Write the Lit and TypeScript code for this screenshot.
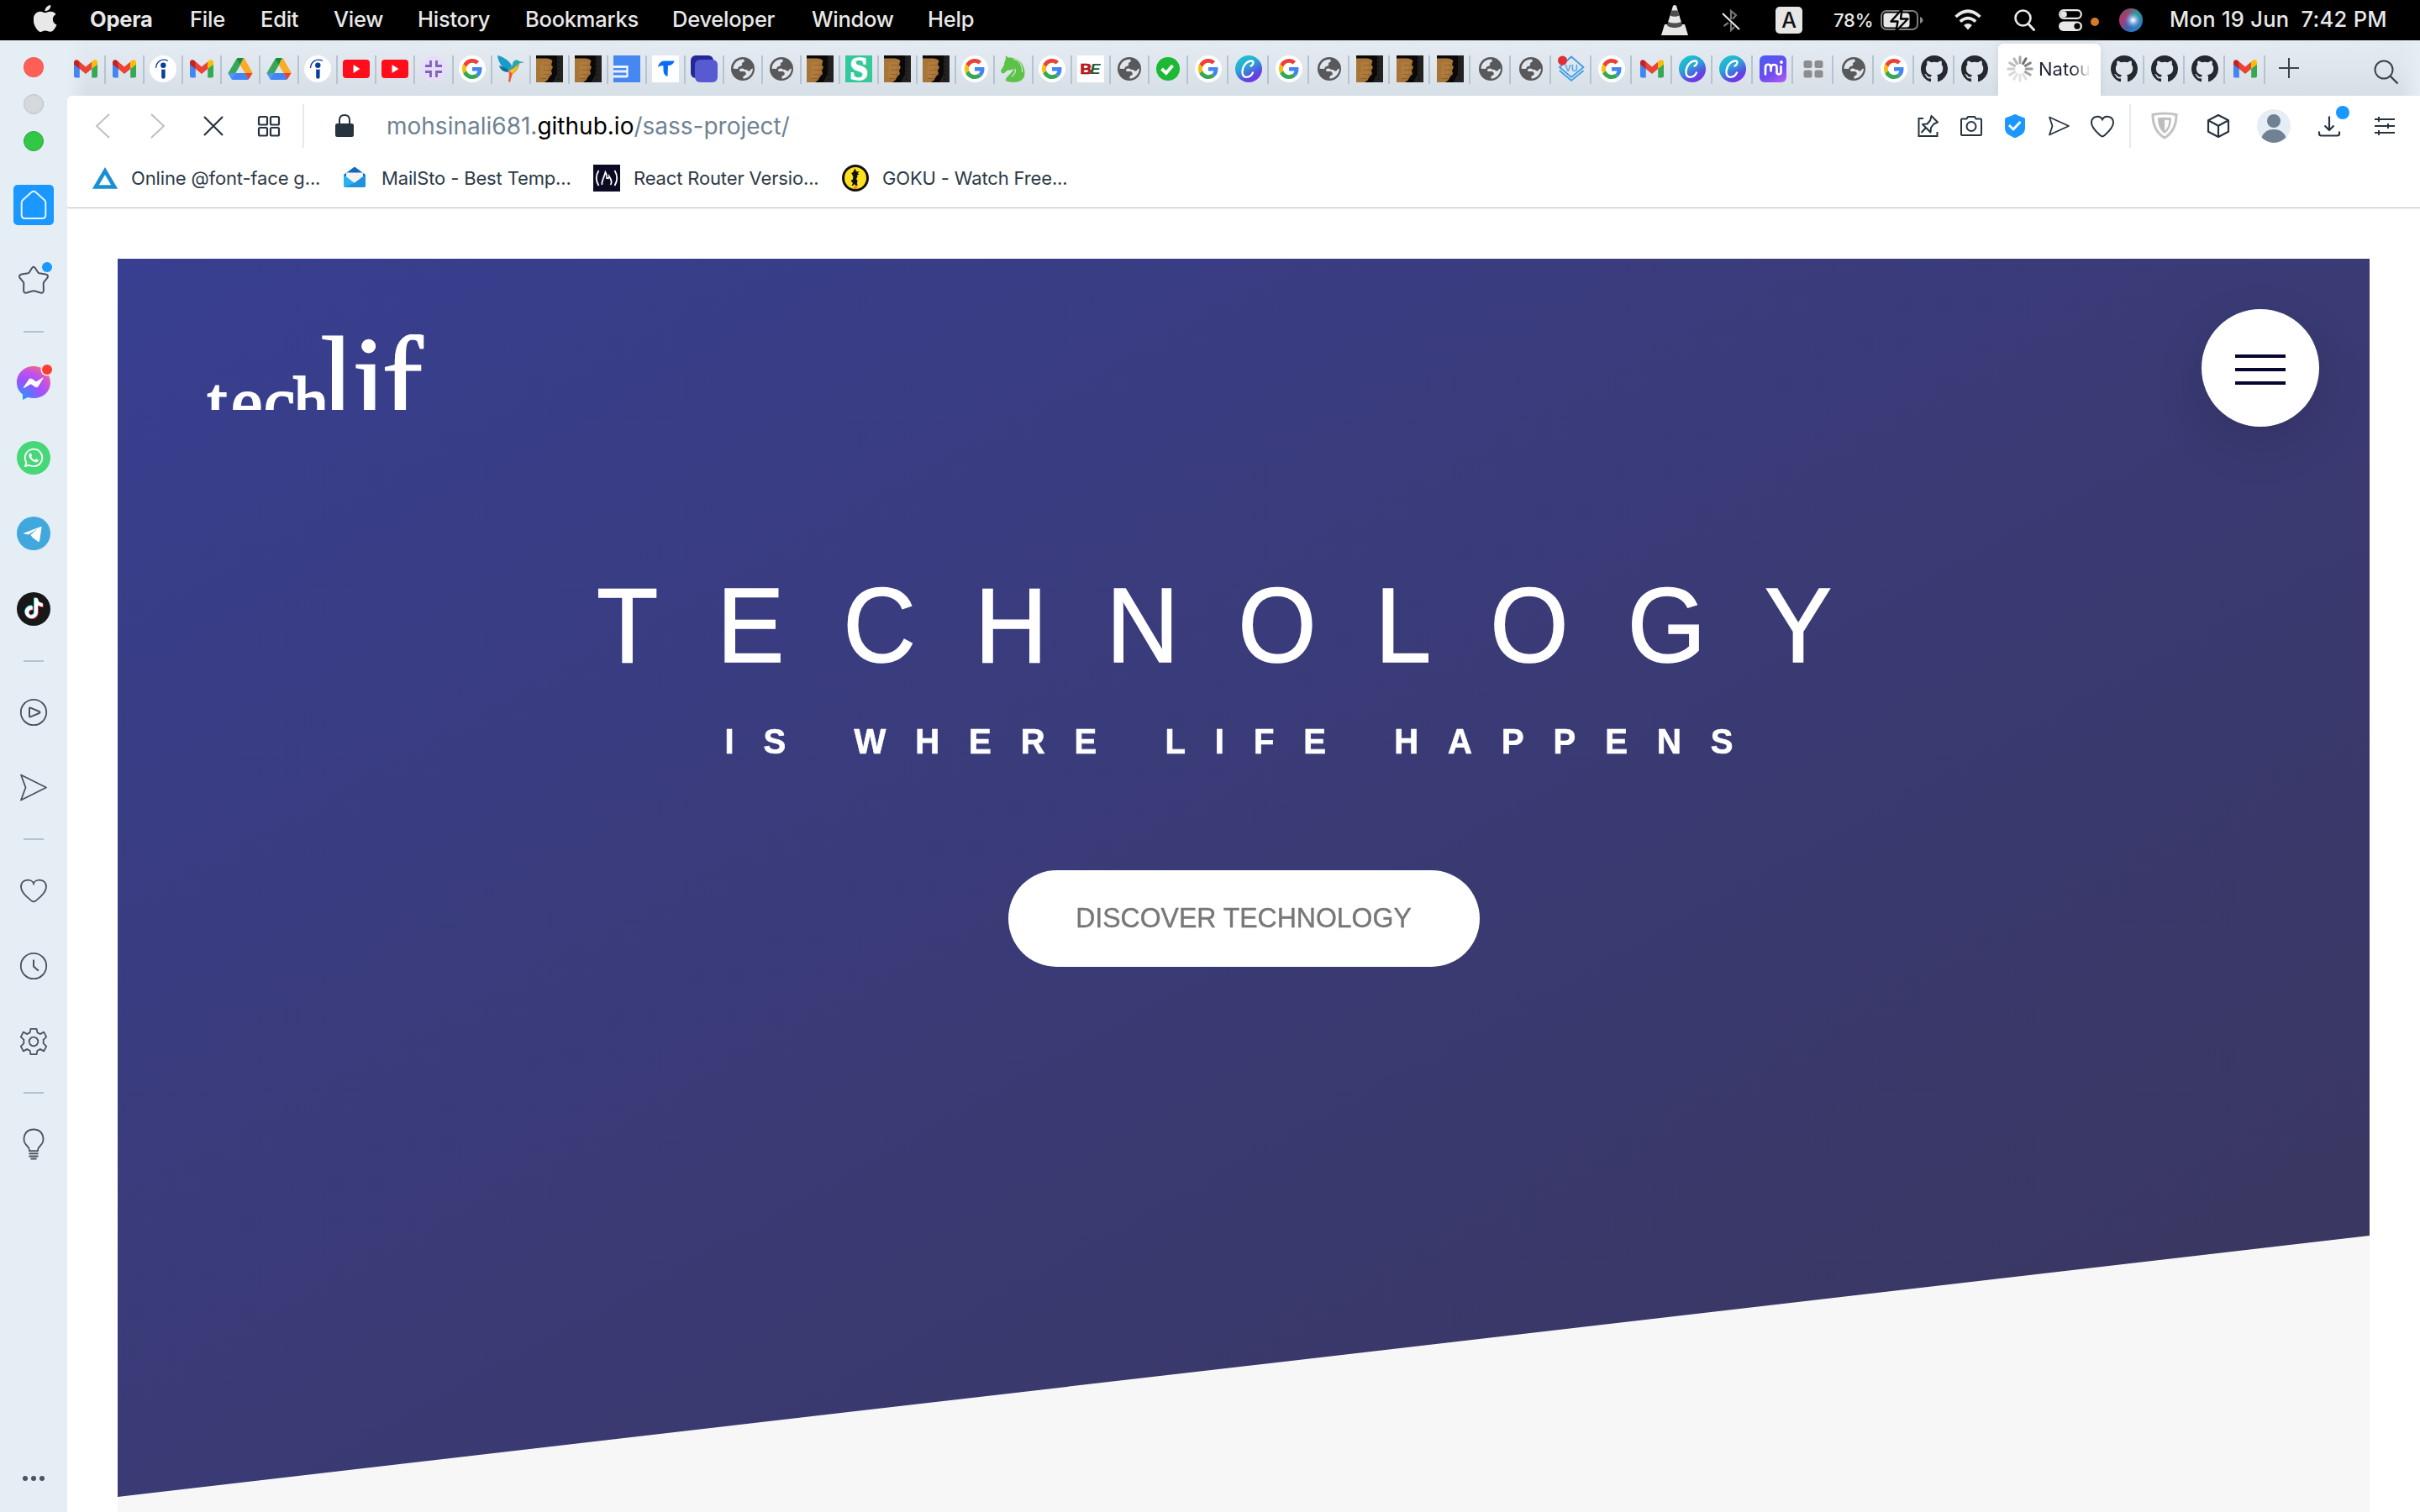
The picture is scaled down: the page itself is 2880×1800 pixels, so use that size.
import { LitElement, html, svg, css, TemplateResult, SVGTemplateResult } from "lit";
import { customElement } from "lit/decorators.js";

type Glyph = SVGTemplateResult;

const frame = (body: Glyph, w: number, h: number, vb = `0 0 ${w} ${h}`): TemplateResult =>
  html`<svg width=${w} height=${h} viewBox=${vb} fill="none">${body}</svg>`;

/* ---------- site icons, 32 x 32 ---------- */

const fav: Record<string, Glyph> = {
  gmail: svg`
    <path fill="#4285f4" d="M2 9v15.500q0 2 2 2h4.800V13.500z"/>
    <path fill="#34a853" d="M30 9v15.500q0 2-2 2h-4.800V13.500z"/>
    <path fill="#ea4335" d="M8.800 7.500 16 13.500l7.200-6v8.500L16 22l-7.200-6z"/>
    <path fill="#c5221f" d="M2 8.500C2 5 5.500 4.500 7.500 6.300l1.300 1.200V16L2 10.800z"/>
    <path fill="#fbbc04" d="M30 8.500C30 5 26.500 4.500 24.500 6.300l-1.300 1.200V16L30 10.800z"/>`,
  indeed: svg`
    <circle cx="16" cy="16" r="16" fill="#fff"/>
    <circle cx="16.300" cy="11.800" r="3.200" fill="#0b3d99"/>
    <path fill="#0b3d99" d="M14.200 16.300q2.200 1 4.400 0V26q0 1.800-2.200 1.800T14.200 26z"/>
    <path stroke="#0b3d99" stroke-width="1.300" d="M7.500 15C8 8 14 2.500 22 6.500"/>`,
  drive: svg`
    <path fill="#3aa757" d="M11.500 4 16 11.500 6 28.500 1.500 21z"/>
    <path fill="#188a3c" d="M13 3h7l-4.200 8.500L11.500 4.500q.5-1.500 1.500-1.500z"/>
    <path fill="#fbab24" d="M20 3q.8.300 1.300 1.300L30.500 20.500V21h-9L15.800 11.500z"/>
    <path fill="#dde5ee" d="m16 12 5.300 9H10.700z"/>
    <path fill="#4285f4" d="M10.700 21h11L26 28.300l-1 .7H7.500Q6 29 5.300 27.500L1.500 21z"/>
    <path fill="#4f95f8" d="M10.700 21 6 28.500 1.500 21z"/>
    <path fill="#ea4335" d="M21.500 21h9L27 27q-.5 1-1.500 1.200z"/>`,
  youtube: svg`<rect y="5" width="32" height="22" rx="4" fill="#ff0d1a"/><path fill="#fff" d="m12.500 11 8 5-8 5z"/>`,
  focus: svg`<circle cx="16" cy="16" r="15.500" fill="#e8dcfb"/>
    <path stroke="#7c66b4" stroke-width="2.800" d="M12.500 6v6.500H6M19.500 6v6.500H26M12.500 26v-6.500H6M19.500 26v-6.500H26"/>`,
  google: svg`<circle cx="16" cy="16" r="16" fill="#fff"/><g transform="translate(4 4) scale(.5)">
    <path fill="#ea4335" d="M24 9.500c3.540 0 6.710 1.220 9.210 3.600l6.850-6.850C35.900 2.380 30.470 0 24 0 14.620 0 6.510 5.380 2.560 13.220l7.980 6.190C12.430 13.720 17.740 9.500 24 9.500z"/>
    <path fill="#4285f4" d="M46.980 24.550c0-1.570-.15-3.090-.38-4.550H24v9.020h12.940c-.58 2.960-2.260 5.480-4.780 7.180l7.730 6c4.510-4.180 7.090-10.360 7.090-17.650z"/>
    <path fill="#fbbc05" d="M10.530 28.590c-.48-1.450-.76-2.990-.76-4.590s.27-3.140.76-4.590l-7.980-6.190C.92 16.460 0 20.120 0 24c0 3.880.92 7.540 2.560 10.780l7.970-6.190z"/>
    <path fill="#34a853" d="M24 48c6.480 0 11.930-2.130 15.890-5.810l-7.730-6c-2.150 1.450-4.920 2.300-8.160 2.300-6.260 0-11.570-4.220-13.470-9.910l-7.980 6.190C6.510 42.620 14.620 48 24 48z"/></g>`,
  bird: svg`
    <path fill="#1a9cc9" d="M0 0c6 1 14 6 17 12l-4 7C6 16 1 8 0 0z"/>
    <path fill="#0d6f9b" d="M2 12c3 1 7 3 10 4l1 4C8 20 3 17 2 12z"/>
    <path fill="#2aa7a9" d="M18 11c0-5 5-7 8-4l6 1-6 1.500c-1 6-3 9-7 11l-6-3z"/>
    <path fill="#f5a21d" d="M25 10c0 6-3 10-7 12l-5-4c4-1 8-4 12-8z"/>
    <path fill="#ee5a36" d="M13 17c2 1 4 3 5 5l-2 6-1 4-2-1c1-5 1-9 0-14z"/>
    <path fill="#f7c331" d="M24 11c-2 4-6 6-10 7l3 3c4-2 6-6 7-10z"/>`,
  photo: svg`
    <rect width="32" height="32" fill="#232220"/>
    <path fill="#0a0908" d="M0 0h25v22l-5 10H0z"/>
    <path fill="#a87538" d="M0 3.500h13q5 .5 6.500 3L18 11l2 3-2 4 1 4-3 3-2.500 4.500L10 32H0z"/>
    <path fill="#bb8546" d="M6 8h9l1 4-2 4 1 5-5 5H5z" opacity=".4"/>
    <path stroke="#6f4a20" stroke-width="1.200" d="M9 11.500h10M8 17.500h10M8 22.500h9M6 27.500h7" opacity=".45"/>
    <path stroke="#101010" stroke-width="1.500" stroke-dasharray="2 3" d="M26.500 2v28"/>`,
  news: svg`<rect width="32" height="32" fill="#4688f1"/>
    <path stroke="#e8f0ff" stroke-width="2.800" d="M0 13.500h16M0 19h16M0 25h16"/><path stroke="#fff" stroke-width="2" d="M16.500 12v14"/>`,
  swoosh: svg`<rect width="32" height="32" fill="#fff"/>
    <path fill="#0b6cf5" d="M7 14c1-5 4-7.500 8-7.500h11.500c-1 4-4 5.500-7.500 5.500l-.5 13c-3.500-1-5-4-5-8V12.500C11 12 9 12.500 7 14z"/>`,
  stack: svg`<rect width="27" height="27" rx="6" fill="#232a94"/><rect x="5" y="5" width="27" height="27" rx="6" fill="#585ad2"/>`,
  globe: svg`<circle cx="16" cy="16" r="14" fill="#59595b"/>
    <path fill="#dfe6ed" d="M4.500 15.700C5 9 10 4.500 17 4.500l.8 1.700q.2 1.300-1 1.800l-1.500.8q-.6.500-.2 1.500.4 1.300-.6 2l-3 1.200q-.8.300-1 1.200l-.3 1.300z"/>
    <path fill="#dfe6ed" d="M28 15.500C27.800 22 23 27 16.800 27.700l-.5-1.700q0-1.500 1.500-2l1.200-.5q1-.5.8-2-.1-2-2-2.500h-5.300l-.5-2.500q3.500-2 5.800.3l3 .2q1.500 2.500 4 1 .8-2.300 3.200-2.500z"/>`,
  essay: svg`<rect width="32" height="32" fill="#33c99b"/><text x="16" y="29" text-anchor="middle" font-family="Liberation Serif, serif" font-weight="700" font-size="39" fill="#fff" stroke="#fff" stroke-width="1.500">S</text>`,
  horse: svg`<path fill="#5dc248" d="M6.500 0 10 2.500C20 2 30 9 29.500 22 29 29 23 32 16 32c-4 0-8-1-9.500-2.500C8 24 14 22 16.500 16c-3 2-6 1-8 2l-4 3.500-2.500-.5-1-3 4-6.500C5 6.500 8 5 6.500 0z"/>
    <path stroke="#dfe6ed" stroke-width="1.200" d="M16 4c7 2 11 8 10.500 16M18 16c1 4-1 7-4 9"/>`,
  be: svg`<rect width="32" height="32" fill="#fff"/>
    <text x="3.500" y="21.500" textLength="14" lengthAdjust="spacingAndGlyphs" font-family="Liberation Sans, sans-serif" font-weight="700" font-size="17" fill="#e3131f" stroke="#6d0b12" stroke-width=".6">B</text>
    <text x="15.500" y="21.500" textLength="12" lengthAdjust="spacingAndGlyphs" font-family="Liberation Sans, sans-serif" font-weight="700" font-style="italic" font-size="17" fill="#1d5a2b">E</text>`,
  check: svg`<circle cx="16" cy="16" r="14" fill="#1bb934"/><path stroke="#fff" stroke-width="3.800" d="m8.500 16 5.300 5 7.700-9"/>`,
  canva: svg`<defs><linearGradient id="cv" x1=".2" y1="0" x2=".75" y2="1"><stop offset="0" stop-color="#1cc6cd"/><stop offset=".4" stop-color="#2aa5d6"/><stop offset=".75" stop-color="#5a4be2"/><stop offset="1" stop-color="#7d2ae8"/></linearGradient></defs>
    <circle cx="16" cy="16" r="16" fill="url(#cv)"/>
    <path stroke="#fff" stroke-width="2.300" stroke-linecap="round" d="M18.500 12.500c2.800-.5 4.500-6 1-6C13.500 6.500 8.500 13 8.500 19.500c0 4 2 6.300 5 6.300 3.200 0 6-2.300 7.500-5.300"/>`,
  vu: svg`<path stroke="#3b9be6" stroke-width="1.700" d="M16 1.500 30.500 14 16 26 2 14zM2 18l14 12 14.500-12"/>
    <text x="16" y="19" text-anchor="middle" font-family="Liberation Sans, sans-serif" font-weight="700" font-size="11" fill="#55a9ea">VU</text>
    <circle cx="5.500" cy="6" r="5.500" fill="#e02f36"/>`,
  motion: svg`<defs><linearGradient id="mo" x1=".2" y1="0" x2=".8" y2="1"><stop offset="0" stop-color="#4f5af0"/><stop offset=".6" stop-color="#6a4cf0"/><stop offset="1" stop-color="#a95cf5"/></linearGradient></defs>
    <rect width="32" height="32" rx="6" fill="url(#mo)"/>
    <path stroke="#fff" stroke-width="2.700" stroke-linecap="round" d="M7 22.500v-8c0-5 6.500-5 6.500 0v5c0-7 .5-8.500 3.800-8.500s3.200 2 3.200 4v5.500c0 2.500 5 2.500 5-.5v-7"/>
    <circle cx="26" cy="8" r="2" fill="#fff"/>`,
  tiles: svg`<g fill="#8c8d8f"><rect x="4.500" y="6" width="10" height="9" rx="2.500"/><rect x="17.500" y="6" width="10" height="9" rx="2.500"/><rect x="4.500" y="17.500" width="10" height="9" rx="2.500"/><rect x="17.500" y="17.500" width="10" height="9" rx="2.500"/></g>`,
  github: svg`<path fill="#24292f" transform="scale(2)" d="M8 0C3.580 0 0 3.580 0 8c0 3.540 2.290 6.530 5.470 7.590.4.070.55-.17.55-.38 0-.19-.01-.82-.01-1.490-2.010.37-2.530-.49-2.690-.94-.09-.23-.48-.94-.82-1.130-.28-.15-.68-.52-.01-.53.63-.01 1.080.58 1.230.82.72 1.210 1.870.87 2.330.66.070-.52.280-.87.510-1.070-1.780-.2-3.640-.89-3.640-3.950 0-.87.310-1.590.82-2.150-.08-.2-.36-1.020.08-2.120 0 0 .67-.21 2.200.82.64-.18 1.320-.27 2-.27s1.360.09 2 .27c1.530-1.040 2.200-.82 2.200-.82.44 1.100.16 1.920.08 2.120.51.56.82 1.270.82 2.150 0 3.070-1.870 3.750-3.650 3.950.29.25.54.73.54 1.480 0 1.070-.01 1.930-.01 2.200 0 .21.15.46.55.38A8.010 8.010 0 0 0 16 8c0-4.420-3.580-8-8-8z"/>`,
};

const NARROW = ["gmail", "gmail", "indeed", "gmail", "drive", "drive", "indeed", "youtube", "youtube", "focus", "google", "bird", "photo", "photo", "news", "swoosh", "stack", "globe", "globe", "photo", "essay", "photo", "photo", "google", "horse", "google", "be", "globe", "check"];
const WIDE = ["google", "canva", "google", "globe", "photo", "photo", "photo", "globe", "globe", "vu", "google", "gmail", "canva", "canva", "motion", "tiles", "globe", "google", "github", "github"];
const AFTER = ["github", "github", "github", "gmail"];

/* ---------- system menu bar ---------- */

@customElement("menu-bar")
export class MenuBar extends LitElement {
  static styles = css`
    :host { display: flex; justify-content: space-between; height: 48px; background: #000; color: #e8e8e8; font: 500 25.5px/46px Inter, "Liberation Sans", sans-serif; box-sizing: border-box; }
    svg { display: block; flex: none; }
    .left, .right { display: flex; align-items: center; height: 48px; white-space: pre; }
    span { height: 48px; }
    .left { padding-left: 40px; }
    .apple { width: 67px; }
    .menus { display: grid; grid-template-columns: 119px 84px 87px 100px 128px 175px 166px 138px 80px; letter-spacing: -0.25px; }
    .app { font-weight: 700; }
    .right { padding-right: 34px; }
    .cone { margin-right: 40px; }
    .bt { margin-right: 42px; }
    .lang { margin-right: 37px; }
    .pct { font-size: 22px; line-height: 48px; width: 56px; letter-spacing: -0.2px; }
    .bat { margin-right: 37px; }
    .wifi { margin-right: 39px; }
    .find { margin-right: 28px; }
    .ctl { margin-right: 10px; }
    .dot { width: 10px; height: 10px; border-radius: 50%; background: #d47d24; margin: 4px 24px 0 0; }
    .siri { margin-right: 32px; }
    .clock { width: 264px; letter-spacing: 0.28px; }
  `;
  render() {
    return html`
      <div class="left">
        <div class="apple">${frame(svg`<path fill="#e8e8e8" transform="translate(-3.500 0) scale(1.420 1.330)" d="M12.152 6.896c-.948 0-2.415-1.078-3.960-1.040-2.040.027-3.910 1.183-4.961 3.014-2.117 3.675-.546 9.103 1.519 12.090 1.013 1.454 2.208 3.090 3.792 3.039 1.520-.065 2.090-.987 3.935-.987 1.831 0 2.350.987 3.960.948 1.637-.026 2.676-1.480 3.676-2.948 1.156-1.688 1.636-3.325 1.662-3.415-.039-.013-3.182-1.221-3.220-4.857-.026-3.040 2.480-4.494 2.597-4.559-1.429-2.090-3.623-2.324-4.390-2.376-2-.156-3.675 1.090-4.610 1.090zM15.530 3.830c.843-1.012 1.400-2.427 1.245-3.830-1.207.052-2.662.805-3.532 1.818-.78.896-1.454 2.338-1.273 3.714 1.338.104 2.715-.688 3.559-1.701"/>`, 28, 36, "0 1 28 34")}</div>
        <div class="menus">
          <span class="app">Opera</span>${["File", "Edit", "View", "History", "Bookmarks", "Developer", "Window", "Help"].map((m) => html`<span>${m}</span>`)}
        </div>
      </div>
      <div class="right">
        <div class="cone">${frame(svg`<path fill="#e6e6e6" d="M4 23h24l4 13H0z"/><path fill="#4d4d4d" d="M8.500 19h15l1.500 5c-2 4-16 4-18 0z"/><path fill="#e6e6e6" d="M14 1q2-2 4 0l5.800 19q-7.800 3-15.600 0z"/><path fill="#4d4d4d" d="m12.500 6.500h7l2 6q-5.500 2.500-11 0z"/>`, 32, 37)}</div>
        <div class="bt">${frame(svg`<path stroke="#777" stroke-width="2.200" d="M11 12V2l6 5-4 4.500M2.500 20 8 16M11 16v9l4-4"/><path stroke="#e6e6e6" stroke-width="2.200" d="m1 5 20 19"/>`, 22, 27)}</div>
        <div class="lang">${frame(svg`<rect width="32" height="32" rx="5" fill="#e6e6e6"/><text x="16" y="25" text-anchor="middle" font-family="Inter, sans-serif" font-weight="500" font-size="25" fill="#111">A</text>`, 32, 32)}</div>
        <span class="pct">78%</span>
        <div class="bat">${frame(svg`<rect x="1" y="1" width="43" height="22" rx="6" stroke="#7d7d7d" stroke-width="2"/><path fill="#8a8a8a" d="M47 8q3.500 1.500 3.500 4T47 16z"/><rect x="3.500" y="3.500" width="31" height="17" rx="3.500" fill="#e6e6e6"/><path fill="#e6e6e6" stroke="#000" stroke-width="2.400" stroke-linejoin="round" d="M25.500-1 12.500 13.500h8L18.500 25 32.500 10.500h-8.500z"/>`, 51, 26, "0 -1 51 26")}</div>
        <div class="wifi">${frame(svg`<path fill="#e8e8e8" d="M16 24.500 11 19q5-4 10 0z"/><path stroke="#e8e8e8" stroke-width="3.600" d="M1.500 9q14.500-13.500 29 0M6.800 14.700q9.200-8 18.400 0"/>`, 32, 26, "0 0 32 26")}</div>
        <div class="find">${frame(svg`<circle cx="10.500" cy="10.500" r="9" stroke="#e8e8e8" stroke-width="2.600"/><path stroke="#e8e8e8" stroke-width="3" stroke-linecap="round" d="m17 17.500 6.500 7"/>`, 25, 26)}</div>
        <div class="ctl">${frame(svg`<rect x="1.200" y="1.200" width="25.600" height="9.600" rx="4.800" stroke="#e8e8e8" stroke-width="2.200"/><circle cx="6" cy="6" r="3.800" fill="#e8e8e8"/><rect y="14.500" width="28" height="11.500" rx="5.700" fill="#e8e8e8"/><circle cx="22" cy="20.200" r="3.600" fill="#000"/>`, 28, 26)}</div>
        <div class="dot"></div>
        <div class="siri">${frame(svg`<defs>
          <radialGradient id="s1" cx=".6" cy=".5" r=".42"><stop offset="0" stop-color="#fff"/><stop offset=".2" stop-color="#c7ddf5"/><stop offset="1" stop-color="#2d79c9" stop-opacity="0"/></radialGradient>
          <linearGradient id="s2" x1="0" y1="0" x2="1" y2="1"><stop offset="0" stop-color="#3b6b6b"/><stop offset=".3" stop-color="#b6356a"/><stop offset=".6" stop-color="#3a63b5"/><stop offset="1" stop-color="#1c9ad0"/></linearGradient>
          <radialGradient id="s3" cx=".75" cy=".25" r=".45"><stop offset="0" stop-color="#21a184"/><stop offset="1" stop-color="#21a184" stop-opacity="0"/></radialGradient></defs>
          <circle cx="14" cy="14" r="14" fill="url(#s2)"/><circle cx="14" cy="14" r="14" fill="url(#s3)"/><circle cx="14" cy="14" r="13" fill="url(#s1)"/>`, 28, 28)}</div>
        <span class="clock">Mon 19 Jun  7:42 PM</span>
      </div>`;
  }
}

/* ---------- browser sidebar ---------- */

const INK = "#4a5260";
const side: Record<string, Glyph> = {
  home: svg`<rect width="48" height="48" rx="5" fill="#1a98ff"/><path stroke="#e8f2fc" stroke-width="2" stroke-linejoin="round" d="M21.500 8.800 11 18.200q-1.300 1.200-1.300 3V36q0 4 4 4h20.600q4 0 4-4V21.200q0-1.800-1.300-3L26.500 8.800q-2.500-2-5 0z"/>`,
  star: svg`<g transform="translate(0 1)"><path stroke="${INK}" stroke-width="2" stroke-linejoin="round" d="M21.800 8.500q2.200-3.500 4.400 0l3 4.800q.5.800 1.500 1l7.500 1.300q4 .8 2.300 4l-4.300 5.200q-.5.800-.5 1.800l.2 8.200q-.2 3.500-3.600 2.700l-6.800-2q-1.500-.5-3 0l-6.800 2q-3.400.8-3.600-2.700l.2-8.200q0-1-.5-1.800L7.500 19.600q-1.700-3.200 2.300-4l7.500-1.300q1-.2 1.500-1z"/><circle cx="40" cy="7" r="6" fill="#1a98ff"/></g>`,
  messenger: svg`<defs><radialGradient id="mg" cx=".15" cy="1" r="1.150"><stop offset="0" stop-color="#1f9bff"/><stop offset=".5" stop-color="#9a52ff"/><stop offset=".75" stop-color="#c452e8"/><stop offset="1" stop-color="#ff6a6a"/></radialGradient></defs>
    <g transform="translate(0 1)"><path fill="url(#mg)" d="M24 4C12.500 4 4 12.500 4 23.500c0 6 2.500 10.500 7 14V44l6-3c2.200.6 4.600 1 7 1 11.500 0 20-8 20-18.500S35.500 4 24 4z"/>
    <path fill="#fff" d="m12 29 6.200-9.300q1.500-2.300 4-.6l4.200 3q.6.400 1.200 0L35 17.500q1-.6.500.8L29.500 28q-1.600 2.300-4 .6l-4.200-3q-.6-.4-1.200 0L12.600 30q-1.200.4-.6-1z"/>
    <circle cx="40" cy="8" r="7.600" fill="#e5edf5"/><circle cx="40" cy="8" r="6" fill="#ff3b34"/></g>`,
  whatsapp: svg`<circle cx="24" cy="24" r="20" fill="#46d877"/><path fill="#fff" transform="translate(12.700 12.700) scale(.94)" d="M17.472 14.382c-.297-.149-1.758-.867-2.030-.967-.273-.099-.471-.148-.670.150-.197.297-.767.966-.940 1.164-.173.199-.347.223-.644.075-.297-.150-1.255-.463-2.390-1.475-.883-.788-1.480-1.761-1.653-2.059-.173-.297-.018-.458.130-.606.134-.133.298-.347.446-.520.149-.174.198-.298.298-.497.099-.198.050-.371-.025-.520-.075-.149-.669-1.612-.916-2.207-.242-.579-.487-.5-.669-.510-.173-.008-.371-.010-.570-.010-.198 0-.520.074-.792.372-.272.297-1.040 1.016-1.040 2.479 0 1.462 1.065 2.875 1.213 3.074.149.198 2.096 3.200 5.077 4.487.709.306 1.262.489 1.694.625.712.227 1.360.195 1.871.118.571-.085 1.758-.719 2.006-1.413.248-.694.248-1.289.173-1.413-.074-.124-.272-.198-.570-.347m-5.421 7.403h-.004a9.870 9.870 0 01-5.031-1.378l-.361-.214-3.741.982.998-3.648-.235-.374a9.860 9.860 0 01-1.510-5.260c.001-5.450 4.436-9.884 9.888-9.884 2.640 0 5.122 1.030 6.988 2.898a9.825 9.825 0 012.893 6.994c-.003 5.450-4.437 9.884-9.885 9.884m8.413-18.297A11.815 11.815 0 0012.050 0C5.495 0 .16 5.335.157 11.892c0 2.096.547 4.142 1.588 5.945L.057 24l6.305-1.654a11.882 11.882 0 005.683 1.448h.005c6.554 0 11.890-5.335 11.893-11.893a11.821 11.821 0 00-3.480-8.413z"/>`,
  telegram: svg`<circle cx="24" cy="24" r="20" fill="#41a8de"/><path fill="#fff" d="M12 23.800 32.500 16q1.200-.2 1 1.200L31 33q-.4 1.600-1.800.7l-6-4.500-2.900-3.200 8.500-7.600-11 7.100-5.600-1.200q-.8-.1-.2-.5z"/>`,
  tiktok: svg`<circle cx="24" cy="24" r="20" fill="#181818"/>${[["#25f4ee", 11.6, 10.6], ["#fe2c55", 13.2, 12], ["#fff", 12.4, 11.3]].map(
    ([c, x, y]) => svg`<path fill=${c} transform="translate(${x} ${y})" d="M12.525.020c1.310-.020 2.610-.010 3.910-.020.080 1.530.630 3.090 1.750 4.170 1.120 1.110 2.700 1.620 4.240 1.790v4.030c-1.440-.050-2.890-.350-4.200-.970-.570-.260-1.100-.590-1.620-.930-.010 2.920.010 5.840-.020 8.750-.080 1.400-.540 2.790-1.350 3.940-1.310 1.920-3.580 3.170-5.910 3.210-1.430.080-2.860-.310-4.080-1.030-2.020-1.190-3.440-3.370-3.650-5.710-.020-.5-.030-1-.010-1.490.180-1.900 1.120-3.720 2.580-4.960 1.660-1.440 3.980-2.130 6.150-1.720.020 1.480-.040 2.960-.040 4.440-.990-.320-2.150-.230-3.020.370-.630.410-1.110 1.040-1.360 1.750-.210.510-.150 1.070-.140 1.610.240 1.640 1.820 3.020 3.500 2.870 1.120-.010 2.190-.660 2.770-1.610.190-.330.400-.670.410-1.060.100-1.790.060-3.570.070-5.360.010-4.030-.010-8.050.020-12.070z"/>`,
  )}`,
  play: svg`<circle cx="24" cy="24" r="15.200" stroke="${INK}" stroke-width="1.800"/><path stroke="${INK}" stroke-width="2" stroke-linejoin="round" d="M19 19.500q0-1.300 1.300-.9l10.400 4.400q1.600 1 0 2l-10.400 4.400q-1.300.4-1.300-.9z"/>`,
  send: svg`<path stroke="${INK}" stroke-width="1.800" stroke-linejoin="round" d="m9 8.500 30 15-30 15 5.500-15z"/>`,
  heart: svg`<path stroke="${INK}" stroke-width="1.800" stroke-linejoin="round" d="M24 15.500c3-5.800 15-5.300 15 4.500 0 6.500-8 13-12.700 16.600q-2.300 1.600-4.600 0C17 33 9 26.500 9 20c0-9.800 12-10.300 15-4.500zv2"/>`,
  clock: svg`<circle cx="24" cy="24" r="15.200" stroke="${INK}" stroke-width="1.800"/><path stroke="${INK}" stroke-width="2" d="M24 16.500v8l5.800 5.200"/>`,
  gear: svg`<path stroke="${INK}" stroke-width="1.800" stroke-linejoin="round" d="M20.500 8.800h7l1 4.600q1.700.6 3.200 1.700l4.500-2.500 3 5.800-3.600 3.400q.3 2.200 0 4.400l3.600 3.400-3 5.800-4.500-2.500q-1.500 1.100-3.200 1.700l-1 4.600h-7l-1-4.600q-1.700-.6-3.200-1.700l-4.500 2.500-3-5.800 3.600-3.400q-.3-2.200 0-4.400l-3.600-3.400 3-5.800 4.500 2.500q1.500-1.100 3.200-1.700z"/><circle cx="24" cy="24" r="5.300" stroke="${INK}" stroke-width="1.800"/>`,
  bulb: svg`<path stroke="${INK}" stroke-width="1.800" d="M19 31q-.3-2.500-2.500-4.500C9 19.500 12.500 6.500 24 6.500s15 13 7.500 20Q29.300 28.500 29 31v1.200H19z"/><path stroke="${INK}" stroke-width="2" d="M18.500 35.300h11M18.500 38.600h11M20.500 41.600h7"/>`,
};
const SIDE: (string | number)[] = ["home", "star", 31, "messenger", "whatsapp", "telegram", "tiktok", 33, "play", "send", 32, "heart", "clock", "gear", 32, "bulb"];

@customElement("side-rail")
export class SideRail extends LitElement {
  static styles = css`
    :host { display: flex; flex-direction: column; align-items: center; width: 80px; height: 1752px; background: #e5edf5; box-sizing: border-box; }
    svg { display: block; overflow: visible; }
    .lights { display: flex; flex-direction: column; gap: 20px; padding: 20px 0 19px; }
    .light { width: 24px; height: 24px; border-radius: 50%; box-sizing: border-box; border: 1px solid #0001; }
    .red { background: #ff5f57; }
    .grey { background: #d5d8dc; border-color: #bcc1c6; }
    .green { background: #33c748; border-color: #2aa83a; }
    .slot { display: flex; align-items: center; height: 90px; }
    .rule { display: flex; align-items: center; }
    .line { width: 24px; height: 2px; background: #b5c3d0; }
    .more { display: flex; gap: 4px; margin-top: auto; padding-bottom: 37px; }
    .more i { width: 6px; height: 6px; border-radius: 50%; background: #4a5260; }
  `;
  render() {
    return html`
      <div class="lights"><div class="light red"></div><div class="light grey"></div><div class="light green"></div></div>
      ${SIDE.map((s) => (typeof s === "number"
        ? html`<div class="rule" style="height:${s}px"><div class="line"></div></div>`
        : html`<div class="slot">${frame(side[s], 48, 48)}</div>`))}
      <div class="more"><i></i><i></i><i></i></div>`;
  }
}

/* ---------- tab strip ---------- */

@customElement("tab-strip")
export class TabStrip extends LitElement {
  static styles = css`
    :host { display: flex; height: 66px; background: linear-gradient(90deg, #e5edf5, #e5edf500 24px calc(100% - 24px), #e5edf5), linear-gradient(#e4eaf3, #e0e7ee 40%, #d6dee6); font: 22px/66px Inter, "Liberation Sans", sans-serif; }
    svg { display: block; flex: none; }
    .tab { display: flex; align-items: center; width: 48px; flex: none; box-sizing: border-box; padding: 2px 0 0 1px; }
    .narrow { width: 46px; padding-left: 0; }
    .ico { flex: 1; display: flex; justify-content: center; }
    .bar { width: 2px; height: 34px; background: #b6c3d0; margin-top: 2px; }
    .gap { width: 2px; }
    .active { width: 122px; height: 62px; margin: 4px 4px 0; box-sizing: border-box; padding-left: 10px; display: flex; align-items: center; background: #fff; border-radius: 6px 6px 0 0; box-shadow: 0 0 8px #9db0c455; flex: none; clip-path: inset(-8px -8px 0); }
    .title { width: 62px; margin-left: 6px; overflow: hidden; color: #1c2530; line-height: 58px; height: 60px; -webkit-mask-image: linear-gradient(90deg, #000 65%, transparent); mask-image: linear-gradient(90deg, #000 65%, transparent); }
    .spin { margin-top: -2px; }
    .plus { margin: 21px 0 0 16px; }
    .find { margin: 23px 25px 0 auto; }
  `;
  tab(name: string, narrow: boolean, bar = true) {
    return html`<div class="tab ${narrow ? "narrow" : ""}"><div class="ico">${frame(fav[name], 32, 32)}</div><div class=${bar ? "bar" : "gap"}></div></div>`;
  }
  render() {
    return html`
      ${NARROW.map((n) => this.tab(n, true))}
      ${WIDE.map((n, i) => this.tab(n, false, i < WIDE.length - 1))}
      <div class="active">
        <div class="spin">${frame(svg`${[1, .85, .7, .6, .22, .2, .2, .25, .35, .45, .5, .6].map((o, i) => svg`<path stroke="#6d6d6d" stroke-width="3" stroke-linecap="round" opacity=${o} transform="rotate(${i * 30 + 30} 16 16)" d="M16 1.800v7"/>`)}`, 32, 32)}</div>
        <div class="title">Natou</div>
      </div>
      ${AFTER.map((n) => this.tab(n, false))}
      <div class="plus">${frame(svg`<path stroke="#3c434c" stroke-width="2" d="M12 0v24M0 12h24"/>`, 24, 24)}</div>
      <div class="find">${frame(svg`<circle cx="12" cy="12" r="10.500" stroke="#3c434c" stroke-width="2"/><path stroke="#3c434c" stroke-width="2.400" d="m19 19 9.500 9.500"/>`, 30, 30)}</div>`;
  }
}

/* ---------- address row and bookmarks ---------- */

const D = "#263440";
const tools: Record<string, Glyph> = {
  pin: svg`<path stroke="${D}" stroke-width="2" d="M11 7H5.500v21h22v-5"/><path stroke="${D}" stroke-width="2" stroke-linejoin="round" d="m20.500 4 7.500 7.500-4.500 2-3.500 4.500-.5 5.500L10 14l5.500-.5 3.500-4zM14 18l-5.500 6"/>`,
  camera: svg`<path stroke="${D}" stroke-width="2" stroke-linejoin="round" d="M4 8.500q0-1 1-1h5.500L12 5h8l1.500 2.500H27q1 0 1 1V26q0 1-1 1H5q-1 0-1-1z"/><circle cx="16" cy="16.500" r="5.500" stroke="${D}" stroke-width="2"/>`,
  guard: svg`<path fill="#1a98ff" d="M16 2q2 0 3.500 1.500l7 2.500q1.500.6 1.500 2.200V18c0 4-1.500 6.500-4.500 8.500L18 29.500q-2 1-4 0l-5.500-3C5.500 24.500 4 22 4 18V8.200q0-1.600 1.500-2.200l7-2.500Q14 2 16 2z"/><path stroke="#fff" stroke-width="2.800" d="m9 15 5 5 8.500-9"/>`,
  send: svg`<path stroke="${D}" stroke-width="1.800" stroke-linejoin="round" d="m5 5.500 23 10.500L5 26.500 8.500 16z"/>`,
  heart: svg`<path stroke="${D}" stroke-width="2" stroke-linejoin="round" d="M16 8c3-5.500 13-4 13 4 0 6.500-7 12-11 15.500q-2 1.700-4 0C10 24 3 18.500 3 12 3 4 13 2.500 16 8zv1.500"/>`,
  shield: svg`<g transform="translate(2 0)"><path fill="#fff" stroke="#c3c3c3" stroke-width="3" d="M3 3.500Q17 .5 31 3.500C31 15.500 27.500 25 17 31 6.500 25 3 15.500 3 3.500z"/><path fill="#bdbdbd" d="M9 7.500q8-1.500 16 0c0 8.500-2.500 14-8 18.500C11.500 21.500 9 16 9 7.500z"/><path fill="#fafafa" d="M17 9.500 22.500 10c-.3 6-2 10-5.500 13z"/></g>`,
  cube: svg`<path stroke="${D}" stroke-width="2.200" stroke-linejoin="round" d="m16 3 12 6.300v13.400L16 29 4 22.700V9.300zM4 9.300l12 6.500 12-6.500M16 15.800V29"/>`,
  user: svg`<circle cx="20" cy="20" r="20" fill="#e5edf5"/><circle cx="20" cy="14" r="8" fill="#6f8193"/><path fill="#6f8193" d="M5.500 33.500C8 27 13.500 24 20 24s12 3 14.500 9.500Q28 40 20 40T5.500 33.500z"/>`,
  download: svg`<path stroke="${D}" stroke-width="2.200" d="M16 4.500V21M10.500 15.500 16 21l5.500-5.500M4 22.500V25q0 2.500 2.500 2.500h19q2.500 0 2.500-2.500v-2.500"/><circle cx="32" cy="0" r="8" fill="#1a98ff"/>`,
  sliders: svg`<path stroke="${D}" stroke-width="2" d="M4 8h24M4 16h24M4 24h24M9 5v6M20 13v6M9 21v6"/>`,
};

@customElement("tool-bar")
export class ToolBar extends LitElement {
  static styles = css`
    :host { display: block; height: 134px; box-sizing: border-box; background: #fff; border-bottom: 1px solid #b3bec8; border-radius: 6px 0 0 0; font-family: Inter, "Liberation Sans", sans-serif; }
    svg { display: block; overflow: visible; flex: none; }
    .row { display: flex; align-items: center; height: 72px; }
    .nav { display: flex; padding-left: 9px; }
    .btn { width: 66px; display: flex; justify-content: center; }
    .sep { width: 2px; height: 52px; background: #e6e8ea; }
    .nav + .sep { margin-left: 7px; }
    .lock { margin: 0 39px 0 37px; }
    .url { font-size: 28px; line-height: 40px; color: #6f8293; white-space: nowrap; }
    .url b { font-weight: 400; color: #000; }
    .page { display: flex; margin-left: auto; }
    .page .btn { width: 52px; }
    .page + .sep { margin: 0 5px 0 6px; }
    .ext { display: flex; align-items: center; margin-right: 9px; }
    .marks { display: flex; align-items: center; height: 40px; margin-top: 6px; padding-left: 29px; font-size: 22px; line-height: 40px; color: #2c3a47; letter-spacing: -0.15px; white-space: nowrap; }
    .mark { display: flex; align-items: center; gap: 16px; }
    .tight { gap: 15px; }
  `;
  render() {
    const btn = (g: Glyph, s = 32) => html`<div class="btn">${frame(g, s, s)}</div>`;
    return html`
      <div class="row">
        <div class="nav">
          ${btn(svg`<path stroke="#bcbcbc" stroke-width="1.800" d="M24 2 9 16l15 14"/>`)}
          ${btn(svg`<path stroke="#bcbcbc" stroke-width="1.800" d="m8 2 15 14L8 30"/>`)}
          ${btn(svg`<path stroke="${D}" stroke-width="2.200" d="m5 5 22 22M27 5 5 27"/>`)}
          ${btn(svg`<g stroke="${D}" stroke-width="2.200"><rect x="4" y="5" width="10" height="9.500" rx="1.500"/><rect x="18" y="5" width="10" height="9.500" rx="1.500"/><rect x="4" y="18" width="10" height="9.500" rx="1.500"/><rect x="18" y="18" width="10" height="9.500" rx="1.500"/></g>`)}
        </div>
        <div class="sep"></div>
        <div class="lock">${frame(svg`<rect y="11" width="22" height="16" rx="2.500" fill="${D}"/><path stroke="${D}" stroke-width="2" d="M5 12V7q0-6 6-6t6 6v5"/>`, 22, 28)}</div>
        <div class="url">mohsinali681.<b>github.io</b>/sass-project/</div>
        <div class="page">${["pin", "camera", "guard", "send", "heart"].map((k) => btn(tools[k]))}</div>
        <div class="sep"></div>
        <div class="ext">
          <div class="btn">${frame(tools.shield, 34, 34)}</div>${btn(tools.cube)}${btn(tools.user, 40)}${btn(tools.download)}${btn(tools.sliders)}
        </div>
      </div>
      <div class="marks">
        <div class="mark tight" style="width:297px">${frame(svg`<path stroke="#1b8fd0" stroke-width="4.500" d="M16 7.500 4.800 26.500h22.400z"/>`, 32, 32)}<span>Online @font-face g...</span></div>
        <div class="mark" style="width:300px">${frame(svg`<path fill="#1268bd" d="M3 12 16 2.500 29 12v6H3z"/><path fill="#f3f3f3" d="M6 9.500h20V20L16 24 6 20z"/><path fill="#2ab3f0" d="m3 12 13 10 13-10v13q0 2-2 2H5q-2 0-2-2z"/><path fill="#1f93dd" d="m29 12-13 9.500L4 26.700q.5.300 1 .3h22q2 0 2-2z"/>`, 32, 32)}<span>MailSto - Best Temp...</span></div>
        <div class="mark" style="width:296px">${frame(svg`<rect width="32" height="32" fill="#0a0a23"/><path stroke="#fff" stroke-width="1.800" d="M6.500 7q-5.500 9 0 18M25.500 7q5.500 9 0 18"/><path stroke="#fff" stroke-width="1.800" d="M10.500 24c-1-5 2-7 4-15 2 3 2 5 1.500 7 2 1 3-.5 3-2 2 3 4 7 1.500 10"/>`, 32, 32)}<span>React Router Versio...</span></div>
        <div class="mark">${frame(svg`<circle cx="16" cy="16" r="14.500" fill="#fde01f" stroke="#111" stroke-width="3"/><path fill="#111" d="M15.500 4.500 17 8l4 .5-2.500 1.500 2 1.500-2.500 1 .5 2-1.500 2.500 1.500 2-.5 3 .5 3h-2.500l-1-2-2 2h-1.500l1.500-3-2.500-3 2.500-1.500.3-3-1.500-3.500L11 10l2-.8z"/><path fill="#e8751a" d="M13 26.500h6l-3 3z"/>`, 32, 32)}<span>GOKU - Watch Free...</span></div>
      </div>`;
  }
}

/* ---------- the loaded page ---------- */

@customElement("hero-page")
export class HeroPage extends LitElement {
  static styles = css`
    :host { display: block; height: 1552px; box-sizing: border-box; padding: 60px 60px 0; background: #fff; font-family: "Liberation Sans", Arial, sans-serif; overflow: hidden; }
    .body { height: 1492px; background: #f7f7f7; }
    .hero { display: flex; flex-direction: column; height: 1474px; color: #fff; background: linear-gradient(to right bottom, #383f90, #3a3a74 52%, #3a365c); clip-path: polygon(0 0, 100% 0, 100% 1163px, 0 100%); }
    .top { display: flex; justify-content: space-between; box-sizing: border-box; padding: 60px 60px 0 100px; height: 369px; }
    .logo { display: block; margin-top: 30px; overflow: hidden; }
    .burger { width: 140px; height: 140px; border-radius: 50%; background: #fff; box-shadow: 0 20px 60px #0000001f; display: flex; flex-direction: column; align-items: center; gap: 12px; padding-top: 54px; box-sizing: border-box; }
    .burger i { width: 60px; height: 4px; background: #060630; }
    h1 { margin: 0; display: flex; flex-direction: column; align-items: center; font-weight: 400; white-space: nowrap; }
    .main, .sub, .label { display: block; -webkit-text-stroke: 0.7px; transform: scaleY(1.045); transform-origin: 0 80%; }
    .main { font-size: 120px; line-height: 138px; letter-spacing: 70px; -webkit-text-stroke: 1.4px; }
    .sub { font-size: 40px; line-height: 46px; letter-spacing: 35px; font-weight: 700; margin-top: 45px; }
    .cta { align-self: center; margin-top: 130px; width: 561px; height: 115px; border-radius: 58px; background: #fff; color: #777; font-size: 32px; line-height: 115px; text-align: center; white-space: nowrap; }
    .label { -webkit-text-stroke: 0.4px; transform-origin: 0 50%; }
  `;
  render() {
    return html`
      <div class="body">
        <div class="hero">
          <div class="top">
            <svg class="logo" width="280" height="90" viewBox="240 398 280 90" fill="#fff" stroke="#fff" font-family="Liberation Serif, serif">
              <text x="247 275 314 349" y="507" font-size="84" stroke-width="2.200">tech</text>
              <text x="381 419 454" y="503" font-size="149" stroke-width="1.200">lif</text>
            </svg>
            <div class="burger"><i></i><i></i><i></i></div>
          </div>
          <h1><span class="main">TECHNOLOGY</span><span class="sub">IS WHERE LIFE HAPPENS</span></h1>
          <div class="cta"><span class="label">DISCOVER TECHNOLOGY</span></div>
        </div>
      </div>`;
  }
}

@customElement("app-root")
export class AppRoot extends LitElement {
  static styles = css`
    :host { display: block; width: 2880px; height: 1800px; overflow: hidden; background: #e5edf5; }
    .window { display: grid; grid-template-columns: 80px 2800px; height: 1752px; }
  `;
  render() {
    return html`
      <menu-bar></menu-bar>
      <div class="window">
        <side-rail></side-rail>
        <div class="main"><tab-strip></tab-strip><tool-bar></tool-bar><hero-page></hero-page></div>
      </div>`;
  }
}
